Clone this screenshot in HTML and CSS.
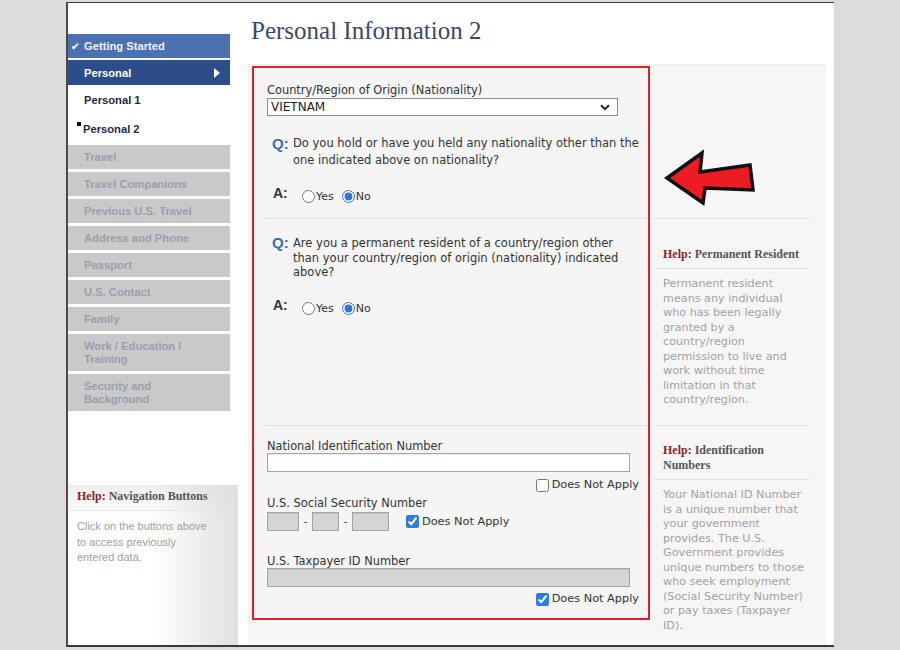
FILE: index.html
```html
<!DOCTYPE html>
<html lang="en">
<head>
<meta charset="utf-8">
<title>Personal Information 2</title>
<link rel="stylesheet" href="styles.css">
</head>
<body>
<div class="frame">
  <aside class="sidebar">
    <ul class="steps">
      <li class="step step-done"><span class="tick">&#10004;</span>Getting Started</li>
      <li class="step step-current">Personal<span class="caret"></span></li>
      <li class="substep">Personal 1</li>
      <li class="substep substep-active">Personal 2</li>
      <li class="step step-locked">Travel</li>
      <li class="step step-locked">Travel Companions</li>
      <li class="step step-locked">Previous U.S. Travel</li>
      <li class="step step-locked">Address and Phone</li>
      <li class="step step-locked">Passport</li>
      <li class="step step-locked">U.S. Contact</li>
      <li class="step step-locked">Family</li>
      <li class="step step-locked step-tall">Work / Education /<br>Training</li>
      <li class="step step-locked step-tall">Security and<br>Background</li>
    </ul>
    <div class="nav-help">
      <h3 class="help-title nav-help-title"><span class="help-word">Help:</span> Navigation Buttons</h3>
      <p class="nav-help-text">Click on the buttons above<br>to access previously<br>entered data.</p>
    </div>
  </aside>

  <main class="main">
    <h1 class="page-title">Personal Information 2</h1>
    <div class="panel">
      <div class="form-col">
        <section class="row row-nationality">
          <label class="field-label" for="nationality">Country/Region of Origin (Nationality)</label>
          <div class="select-wrap">
            <select id="nationality" class="select">
              <option>VIETNAM</option>
            </select>
            <svg class="select-chevron" width="10" height="7" viewBox="0 0 10 7"><path d="M1 1.2 L5 5.2 L9 1.2" fill="none" stroke="#222" stroke-width="2"/></svg>
          </div>
          <div class="qa-q q-first">
            <span class="q-mark">Q:</span>
            <p class="q-text">Do you hold or have you held any nationality other than the<br>one indicated above on nationality?</p>
          </div>
          <div class="qa-a a-first">
            <span class="a-mark">A:</span>
            <input type="radio" name="other_nat" id="other_nat_y" class="radio">
            <label for="other_nat_y" class="radio-label">Yes</label>
            <input type="radio" name="other_nat" id="other_nat_n" class="radio" checked>
            <label for="other_nat_n" class="radio-label">No</label>
          </div>
        </section>

        <section class="row row-resident">
          <div class="qa-q q-second">
            <span class="q-mark">Q:</span>
            <p class="q-text">Are you a permanent resident of a country/region other<br>than your country/region of origin (nationality) indicated<br>above?</p>
          </div>
          <div class="qa-a a-second">
            <span class="a-mark">A:</span>
            <input type="radio" name="perm_res" id="perm_res_y" class="radio">
            <label for="perm_res_y" class="radio-label">Yes</label>
            <input type="radio" name="perm_res" id="perm_res_n" class="radio" checked>
            <label for="perm_res_n" class="radio-label">No</label>
          </div>
        </section>

        <section class="row row-ids">
          <label class="field-label" for="nin">National Identification Number</label>
          <input type="text" id="nin" class="text-input">
          <div class="dna dna-right dna-nin">
            <input type="checkbox" id="nin_na" class="check">
            <label for="nin_na">Does Not Apply</label>
          </div>

          <label class="field-label label-ssn" for="ssn1">U.S. Social Security Number</label>
          <div class="ssn">
            <input type="text" id="ssn1" class="text-input ssn-part ssn-1" disabled>
            <span class="ssn-dash">-</span>
            <input type="text" class="text-input ssn-part ssn-2" disabled>
            <span class="ssn-dash">-</span>
            <input type="text" class="text-input ssn-part ssn-3" disabled>
            <div class="dna dna-ssn">
              <input type="checkbox" id="ssn_na" class="check" checked>
              <label for="ssn_na">Does Not Apply</label>
            </div>
          </div>

          <label class="field-label label-tax" for="tax">U.S. Taxpayer ID Number</label>
          <input type="text" id="tax" class="text-input" disabled>
          <div class="dna dna-right dna-tax">
            <input type="checkbox" id="tax_na" class="check" checked>
            <label for="tax_na">Does Not Apply</label>
          </div>
        </section>
      </div>

      <div class="help-col">
        <div class="help-row help-row-arrow">
          <svg class="pointer" width="96" height="60" viewBox="0 0 96 60">
            <path d="M5 30 L40 5 L38 24 L88 17 L91 42 L43 40 L41 55 Z" fill="#ec1c24" stroke="#111" stroke-width="3.5" stroke-linejoin="miter"/>
          </svg>
        </div>
        <div class="help-row help-row-resident">
          <h3 class="help-title"><span class="help-word">Help:</span> Permanent Resident</h3>
          <p class="help-text">Permanent resident<br>means any individual<br>who has been legally<br>granted by a<br>country/region<br>permission to live and<br>work without time<br>limitation in that<br>country/region.</p>
        </div>
        <div class="help-row help-row-ids">
          <h3 class="help-title"><span class="help-word">Help:</span> Identification<br>Numbers</h3>
          <p class="help-text">Your National ID Number<br>is a unique number that<br>your government<br>provides. The U.S.<br>Government provides<br>unique numbers to those<br>who seek employment<br>(Social Security Number)<br>or pay taxes (Taxpayer<br>ID).</p>
        </div>
      </div>
    </div>
  </main>
</div>
</body>
</html>
```

FILE: styles.css
```css
* {
  box-sizing: border-box;
}

html,
body {
  margin: 0;
  padding: 0;
}

body {
  width: 900px;
  height: 650px;
  overflow: hidden;
  background: #dddbdc;
  font-family: "DejaVu Sans", Verdana, sans-serif;
}

/* window frame */
.frame {
  display: flex;
  width: 768px;
  height: 645px;
  margin: 2px 0 0 66px;
  background: #fff;
  border-top: 1px solid #3a3a3a;
  border-left: 2px solid #4a4a4a;
  border-bottom: 2px solid #3a3a3a;
  overflow: hidden;
}

/* ---------- left navigation ---------- */
.sidebar {
  display: flex;
  flex-direction: column;
  width: 170px;
  flex: none;
}

.steps {
  list-style: none;
  margin: 31px 0 0;
  padding: 0;
  width: 162px;
  font: bold 11.2px "Liberation Sans", Arial, sans-serif;
}

.step {
  display: flex;
  align-items: center;
  height: 24px;
  padding-left: 16px;
  margin-bottom: 3px;
}

.step-done {
  background: #4b71b1;
  color: #eef2fa;
  padding-left: 3px;
  margin-bottom: 2px;
}

.tick {
  width: 13px;
  font-size: 10px;
}

.step-current {
  justify-content: space-between;
  height: 25px;
  margin-bottom: 0;
  padding-right: 10px;
  background: #2d4d8a;
  color: #fff;
}

.caret {
  width: 0;
  height: 0;
  border-left: 6px solid #fff;
  border-top: 5px solid transparent;
  border-bottom: 5px solid transparent;
}

.substep {
  display: flex;
  align-items: center;
  height: 29px;
  padding-left: 16px;
  color: #1c2948;
}

.substep-active {
  margin-bottom: 2px;
}

.substep-active::before {
  content: "";
  align-self: flex-start;
  width: 4px;
  height: 4px;
  margin: 8px 2px 0 -7px;
  background: #111;
}

.step-locked {
  background: #c9c9c9;
  color: #98a0b0;
}

.step-tall {
  height: 37px;
  line-height: 12.5px;
}

.nav-help {
  flex: 1;
  margin-top: 71px;
  padding: 4px 0 0;
  background:
    linear-gradient(to right, rgba(255, 255, 255, 0) 50%, rgba(222, 222, 222, 0.95) 100%),
    linear-gradient(#eeeeee, #fff 34px);
}

.help-title {
  margin: 0;
  font: bold 12px/15px "Liberation Serif", "Times New Roman", serif;
  color: #555;
}

.help-word {
  color: #8c2424;
}

.nav-help-title {
  padding: 0 0 6px 9px;
  margin-right: 10px;
  border-bottom: 1px solid #e4e4e4;
}

.nav-help-text {
  margin: 8px 0 0 9px;
  font: 11px/15.5px "Liberation Sans", Arial, sans-serif;
  color: #a0a0a0;
}

/* ---------- main column ---------- */
.main {
  display: flex;
  flex-direction: column;
  flex: 1;
  padding-left: 10px;
}

.page-title {
  margin: 13px 0 0 3px;
  font: normal 25px/30px "Liberation Serif", "Times New Roman", serif;
  color: #3c4866;
}

.panel {
  display: flex;
  flex: 1;
  width: 578px;
  margin-top: 18px;
  padding: 1px 0 0 4px;
  background: #f6f6f6;
  border-top: 1px solid #ececec;
}

.form-col {
  display: flex;
  flex-direction: column;
  width: 398px;
  height: 554px;
  border: 2px solid #d8222a;
  background: #f5f5f5;
}

.row {
  margin-left: 11px;
  padding-left: 2px;
  border-bottom: 1px solid #e2e2e2;
}

.row-nationality {
  height: 151px;
  padding-top: 16px;
}

.row-resident {
  height: 207px;
  padding-top: 17px;
}

.row-ids {
  flex: 1;
  padding-top: 14px;
  border-bottom: 0;
}

.field-label {
  display: block;
  font-size: 11.4px;
  line-height: 13px;
  color: #333;
}

.select-wrap {
  position: relative;
  width: 351px;
  margin-top: 1px;
}

.select {
  display: block;
  width: 351px;
  height: 18px;
  padding: 0 3px;
  border: 1px solid #8c8c8c;
  border-radius: 0;
  background: #fff;
  font: 12px "DejaVu Sans", Verdana, sans-serif;
  color: #222;
  appearance: none;
  -webkit-appearance: none;
}

.select-chevron {
  position: absolute;
  right: 8px;
  top: 6px;
}

.qa-q {
  display: flex;
  padding-left: 5px;
}

.q-first {
  margin-top: 19px;
}

.q-mark {
  flex: none;
  width: 21px;
  font: bold 15px/17px "Liberation Sans", Arial, sans-serif;
  color: #3a6db4;
}

.q-text {
  margin: 0;
  white-space: nowrap;
  font-size: 11.5px;
  line-height: 17px;
  color: #333;
}

.q-second .q-text,
.q-second .q-mark {
  line-height: 14.5px;
}

.qa-a {
  display: flex;
  align-items: flex-start;
  height: 20px;
  padding-left: 6px;
}

.a-first {
  margin-top: 16px;
}

.a-second {
  margin-top: 17px;
}

.a-mark {
  width: 15px;
  font: bold 14px/16px "Liberation Sans", Arial, sans-serif;
  color: #333;
}

.radio {
  width: 13px;
  height: 13px;
  margin: 5px 1px 0 14px;
  accent-color: #2f72db;
}

.radio + .radio-label + .radio {
  margin-left: 8px;
}

.radio-label {
  margin-top: 5px;
  font-size: 11px;
  line-height: 14px;
  color: #333;
}

.text-input {
  display: block;
  width: 363px;
  height: 19px;
  margin: 0;
  padding: 0 3px;
  border: 1px solid #a4a4a4;
  border-radius: 0;
  background: #fff;
  box-shadow: inset 0 1px 1px rgba(0, 0, 0, 0.08);
}

.text-input:disabled {
  background: #d5d5d5;
}

.dna {
  display: flex;
  align-items: center;
  font-size: 11.3px;
  line-height: 14px;
  color: #333;
}

.dna-right {
  justify-content: flex-end;
  padding-right: 9px;
}

.check {
  width: 13px;
  height: 13px;
  margin: 0 3px 0 0;
  accent-color: #2f7be0;
}

.dna-nin {
  margin-top: 6px;
}

.label-ssn {
  margin-top: 5px;
}

.ssn {
  display: flex;
  align-items: center;
  margin-top: 2px;
}

.ssn-part {
  height: 19px;
}

.ssn-1 {
  width: 32px;
}

.ssn-2 {
  width: 27px;
}

.ssn-3 {
  width: 37px;
}

.ssn-dash {
  width: 13px;
  text-align: center;
  font-size: 10px;
  color: #333;
}

.dna-ssn {
  margin-left: 17px;
}

.label-tax {
  margin-top: 24px;
}

.dna-tax {
  margin-top: 5px;
}

/* ---------- help column ---------- */
.help-col {
  display: flex;
  flex-direction: column;
  width: 176px;
}

.help-row {
  margin: 0 16px 0 3px;
  border-bottom: 1px solid #e2e2e2;
}

.help-row-arrow {
  height: 153px;
  padding: 82px 0 0 9px;
}

.pointer {
  display: block;
}

.help-row-resident {
  height: 207px;
  padding-top: 28px;
}

.help-row-ids {
  flex: 1;
  padding-top: 17px;
  border-bottom: 0;
}

.help-row .help-title {
  padding: 0 0 6px 10px;
  border-bottom: 1px solid #e4e4e4;
}

.help-text {
  margin: 8px 0 0;
  padding-left: 10px;
  white-space: nowrap;
  font-size: 11.2px;
  line-height: 14.5px;
  color: #a2a2a2;
}
```
